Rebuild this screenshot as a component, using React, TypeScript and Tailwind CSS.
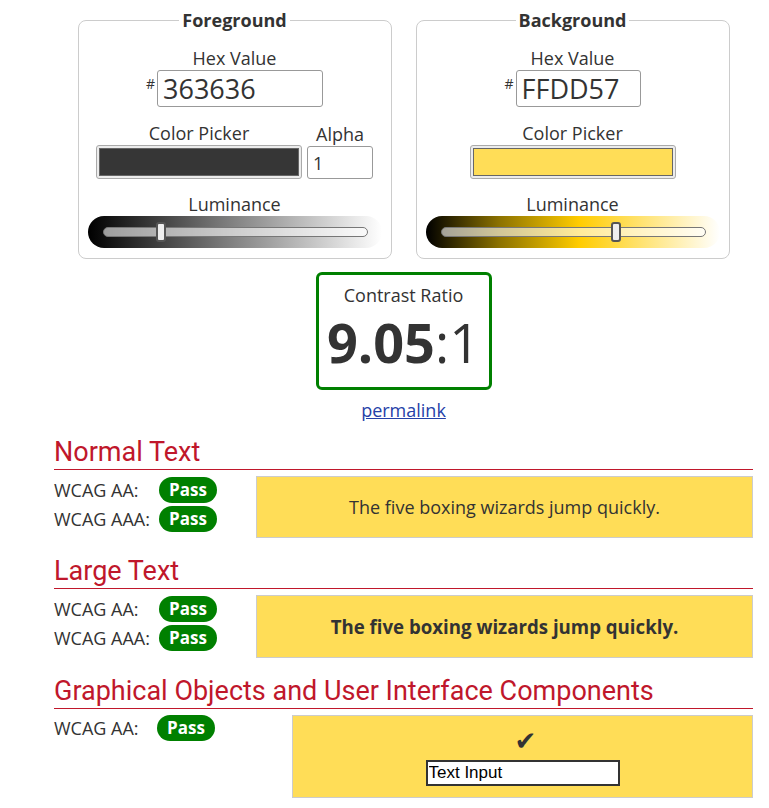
const body = "font-['Open_Sans',sans-serif]";

function HexField({ value, width }: { value: string; width: string }) {
  return (
    <div className="flex items-start">
      <span className="text-[14px] leading-none mt-[7px] mr-[2px]">#</span>
      <input
        readOnly
        value={value}
        className={`${width} h-[37px] border border-[#999] rounded-[3px] bg-white px-[5px] text-[27px] leading-none text-[#333] outline-none`}
      />
    </div>
  );
}

function Swatch({ color }: { color: string }) {
  return (
    <div className="w-[206px] h-[34px] border border-[#aaa] rounded-[3px] bg-[#ececec] p-[2px]">
      <div className="w-full h-full border border-[#666]" style={{ background: color }} />
    </div>
  );
}

function Luminance({ gradient, pos }: { gradient: string; pos: number }) {
  return (
    <div
      className="w-[294px] h-[32px] rounded-full flex items-center pl-[15px] pr-[14px]"
      style={{ background: gradient }}
    >
      <div className="relative w-full h-[10px] rounded-full border border-[#777] bg-white/60">
        <div
          className="absolute top-[-6px] w-[10px] h-[20px] rounded-[3px] border-2 border-[#555] bg-[#eee]"
          style={{ left: `calc(${pos}% - 5px)` }}
        />
      </div>
    </div>
  );
}

function Panel({
  title,
  hex,
  hexWidth,
  color,
  alpha,
  gradient,
  pos,
}: {
  title: string;
  hex: string;
  hexWidth: string;
  color: string;
  alpha?: boolean;
  gradient: string;
  pos: number;
}) {
  return (
    <fieldset className="w-[314px] border border-[#ccc] rounded-lg pb-[10px]">
      <legend className="mx-auto px-[3px] font-bold text-[18px] leading-6">{title}</legend>
      <div className="flex flex-col items-center">
        <div className="mt-[14px] leading-6">Hex Value</div>
        <HexField value={hex} width={hexWidth} />
        <div className="mt-[14px] flex gap-[5px] items-end">
          <div className="flex flex-col items-center">
            <div className="leading-6">Color Picker</div>
            <Swatch color={color} />
          </div>
          {alpha && (
            <div className="flex flex-col items-center">
              <div className="leading-6">Alpha</div>
              <input
                readOnly
                value="1"
                className="w-[66px] h-[33px] border border-[#999] rounded-[3px] bg-white px-[5px] text-[18px] text-[#333] outline-none"
              />
            </div>
          )}
        </div>
        <div className="mt-[13px] leading-6">Luminance</div>
        <Luminance gradient={gradient} pos={pos} />
      </div>
    </fieldset>
  );
}

function Badge() {
  return (
    <span className="inline-flex items-center justify-center w-[58px] h-[26px] rounded-full bg-[#008000] text-white font-bold text-[17px]">
      Pass
    </span>
  );
}

function Row({ label }: { label: string }) {
  return (
    <div className="flex items-center h-[28px]">
      <span className="w-[105px]">{label}</span>
      <Badge />
    </div>
  );
}

function Heading({ children }: { children: string }) {
  return (
    <div>
      <h2 className="font-['Roboto',sans-serif] text-[27px] leading-[30px] pb-[2px] text-[#c0172b]">
        {children}
      </h2>
      <div className="h-px bg-[#c0172b]" />
    </div>
  );
}

export default function App() {
  return (
    <div className={`${body} text-[18px] text-[#333] bg-white min-h-[808px]`}>
      <div className="w-[699px] ml-[54px] pt-[8px]">
        <div className="flex justify-center gap-6">
          <Panel
            title="Foreground"
            hex="363636"
            hexWidth="w-[166px]"
            color="#363636"
            alpha
            gradient="linear-gradient(to right, #000, #777 45%, #fff)"
            pos={22}
          />
          <Panel
            title="Background"
            hex="FFDD57"
            hexWidth="w-[125px]"
            color="#ffdd57"
            gradient="linear-gradient(to right, #000, #8c7200 25%, #ffcc00 52%, #fff)"
            pos={66.5}
          />
        </div>

        <div className="mt-[13px] mx-auto w-[176px] h-[118px] border-[3px] border-[#008000] rounded-md flex flex-col items-center pt-[8px]">
          <div className="leading-6">Contrast Ratio</div>
          <div className="text-[54px] leading-[56px] mt-[7px]">
            <span className="font-bold">9.05</span>:1
          </div>
        </div>
        <div className="text-center mt-[8px] leading-6">
          <a href="#" className="text-[#2541a8] underline">
            permalink
          </a>
        </div>

        <div className="mt-[15px]">
          <Heading>Normal Text</Heading>
          <div className="flex mt-[6px]">
            <div className="w-[202px] flex flex-col gap-[1px]">
              <Row label="WCAG AA:" />
              <Row label="WCAG AAA:" />
            </div>
            <div className="flex-1 h-[62px] border border-[#ccc] bg-[#ffdd57] flex items-center justify-center">
              The five boxing wizards jump quickly.
            </div>
          </div>
        </div>

        <div className="mt-[18px]">
          <Heading>Large Text</Heading>
          <div className="flex mt-[6px]">
            <div className="w-[202px] flex flex-col gap-[1px]">
              <Row label="WCAG AA:" />
              <Row label="WCAG AAA:" />
            </div>
            <div className="flex-1 h-[63px] border border-[#ccc] bg-[#ffdd57] flex items-center justify-center font-bold text-[18.66px]">
              The five boxing wizards jump quickly.
            </div>
          </div>
        </div>

        <div className="mt-[18px]">
          <Heading>Graphical Objects and User Interface Components</Heading>
          <div className="flex mt-[6px]">
            <div className="w-[238px]">
              <div className="flex items-center h-[26px]">
                <span className="w-[103px]">WCAG AA:</span>
                <Badge />
              </div>
            </div>
            <div className="flex-1 h-[83px] border border-[#ccc] bg-[#ffdd57] flex flex-col items-center pt-[10px]">
              <span className="font-['DejaVu_Sans',sans-serif] text-[26px] leading-[30px] ml-[6px]">✔</span>
              <input
                readOnly
                value="Text Input"
                className="mt-[4px] w-[194px] h-[26px] border-2 border-[#333] bg-white px-[1px] font-['Liberation_Sans',Arial,sans-serif] text-[17px] text-black outline-none"
              />
            </div>
          </div>
        </div>
      </div>
    </div>
  );
}
